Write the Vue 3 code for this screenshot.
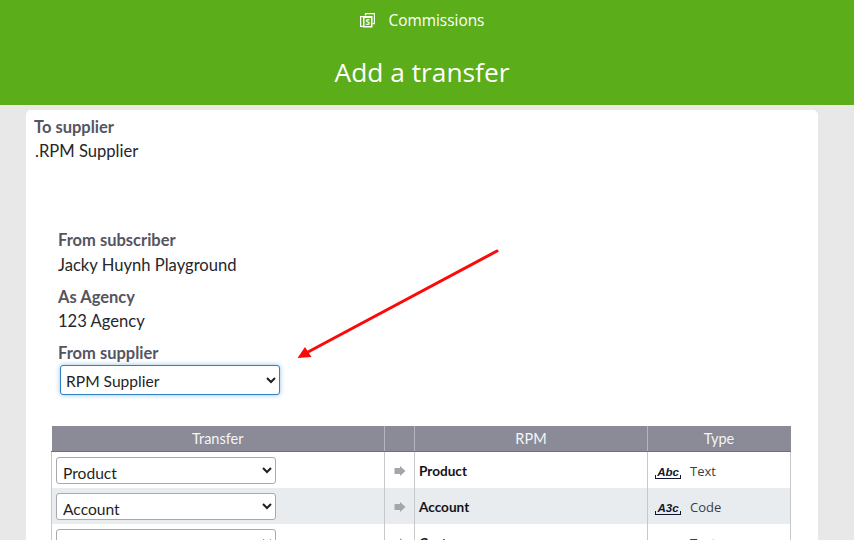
<template>
  <div class="page">
    <header class="top">
      <div class="nav">
        <svg class="nav-icon" width="15" height="15" viewBox="0 0 15 15" fill="none" stroke="#fff" stroke-width="1.2">
          <path d="M5.5 2.5V0.6h8.9v10h-2" />
          <path d="M3 13.4H0.6V3.6H3" />
          <rect x="3" y="3" width="9.5" height="11.5" fill="#fff" stroke="none" />
          <rect x="4.5" y="5" width="6.5" height="8" fill="#5bad1a" stroke="none" />
          <text x="7.7" y="12" class="nav-s">S</text>
        </svg>
        <span>Commissions</span>
      </div>
      <h1>Add a transfer</h1>
    </header>

    <main class="card">
      <section class="to">
        <div class="label">To supplier</div>
        <div class="value">.RPM Supplier</div>
      </section>

      <section class="from">
        <div class="label">From subscriber</div>
        <div class="value">Jacky Huynh Playground</div>
        <div class="label gap">As Agency</div>
        <div class="value">123 Agency</div>
        <div class="label gap">From supplier</div>
        <select class="supplier">
          <option>RPM Supplier</option>
        </select>
      </section>

      <table class="grid">
        <colgroup>
          <col class="c1" />
          <col class="c2" />
          <col class="c3" />
          <col class="c4" />
        </colgroup>
        <thead>
          <tr>
            <th>Transfer</th>
            <th></th>
            <th>RPM</th>
            <th>Type</th>
          </tr>
        </thead>
        <tbody>
          <tr v-for="row in rows" :key="row.name">
            <td class="pick">
              <select>
                <option>{{ row.pick }}</option>
              </select>
            </td>
            <td class="arrow">
              <svg width="12" height="10" viewBox="0 0 12 10">
                <path d="M0.5 2h5.5V0L11.5 5 6 10V8H0.5z" fill="#a5a5ab" />
              </svg>
            </td>
            <td class="name">{{ row.name }}</td>
            <td class="type">
              <span class="type-icon">{{ row.icon }}</span>
              <span>{{ row.type }}</span>
            </td>
          </tr>
        </tbody>
      </table>
    </main>

    <!-- annotation drawn over the screenshot -->
    <svg class="annotation" width="220" height="120" viewBox="0 0 220 120">
      <path d="M201 7 L12 108" stroke="#fb0a0a" stroke-width="3" stroke-linecap="round" />
      <path d="M1.5 114 L9 103 L15.5 113z" fill="#fb0a0a" />
    </svg>
  </div>
</template>

<script setup>
const rows = [
  { pick: 'Product', name: 'Product', icon: 'Abc', type: 'Text' },
  { pick: 'Account', name: 'Account', icon: 'A3c', type: 'Code' },
  { pick: '', name: 'Custom', icon: 'Abc', type: 'Text' }
]
</script>

<style>
html,
body {
  margin: 0;
  height: 540px;
  overflow: hidden;
  background: #e8e8e8;
}
</style>

<style scoped>
.page {
  position: relative;
  height: 540px;
  overflow: hidden;
  background: #e8e8e8;
  font-family: Lato, "Open Sans", sans-serif;
}

.top {
  height: 105px;
  padding-right: 10px;
  background: #5bad1a;
  color: #fff;
  font-family: "Open Sans", sans-serif;
  text-align: center;
}

.nav {
  display: flex;
  justify-content: center;
  align-items: center;
  gap: 14px;
  height: 40px;
  font-size: 15.4px;
}

.nav-s {
  font-size: 8px;
  font-weight: 700;
  fill: #fff;
  stroke: none;
  text-anchor: middle;
}

h1 {
  margin: 0;
  padding-top: 15px;
  font-size: 26.3px;
  font-weight: 400;
  line-height: 34px;
}

.card {
  box-sizing: border-box;
  height: 500px;
  margin: 5px 36px 0 26px;
  padding: 8px 27px 0 8px;
  background: #fff;
  border-radius: 5px;
}

.label {
  font-size: 16.5px;
  font-weight: 700;
  line-height: 18px;
  color: #55555f;
}

.value {
  margin-top: 6.5px;
  font-size: 16.6px;
  line-height: 18px;
  color: #26262b;
}

.to .value {
  margin-top: 6px;
  margin-left: 1px;
}

.from {
  padding: 71px 0 0 24px;
}

.gap {
  margin-top: 14px;
}

select {
  box-sizing: border-box;
  width: 220px;
  height: 27px;
  padding: 4px 2px 0;
  background: #fff;
  border: 1px solid #a9a9ae;
  border-radius: 3px;
  color: #1f1f24;
  font-family: Lato, "Open Sans", sans-serif;
  font-size: 15.6px;
}

.supplier {
  display: block;
  height: 30px;
  margin: 3px 0 0 2px;
  padding: 1px 2px 0 1px;
  border-color: #2f7fc1;
  box-shadow: 0 0 5px rgba(60, 140, 210, 0.55);
}

.grid {
  width: 739px;
  margin: 31px 0 0 17px;
  border-collapse: collapse;
  table-layout: fixed;
}

.c1 {
  width: 333px;
}

.c2 {
  width: 30px;
}

.c3 {
  width: 233px;
}

.c4 {
  width: 143px;
}

th {
  height: 25px;
  padding: 0;
  background: #8a8b96;
  border-right: 1px solid #b4b5bc;
  border-bottom: 1px solid #6f7079;
  color: #f4f4f6;
  font-size: 14.5px;
  font-weight: 400;
}

th:last-child {
  border-right: 1px solid #8a8b96;
}

td {
  box-sizing: border-box;
  height: 36px;
  padding: 0;
  border-left: 1px solid #c8c8cc;
  border-right: 1px solid #c8c8cc;
}

tbody tr:nth-child(even) {
  background: #e9ecee;
}

.pick {
  padding: 2px 0 0 4px;
  vertical-align: middle;
}

.arrow {
  padding: 2px 0 0 1px;
  text-align: center;
  line-height: 0;
}

.name {
  padding: 2px 0 0 4px;
  color: #14141a;
  font-size: 13.6px;
  font-weight: 700;
}

.type {
  padding: 2px 0 0 7px;
  color: #3c3c42;
  font-family: "Open Sans", sans-serif;
  font-size: 13px;
}

.type-icon {
  position: relative;
  display: inline-block;
  width: 26px;
  margin-right: 9px;
  border-bottom: 1px solid #10162f;
  color: #10162f;
  font-family: "Liberation Sans", sans-serif;
  font-size: 11.5px;
  font-style: italic;
  font-weight: 700;
  line-height: 11px;
  text-align: center;
}

.type-icon::before,
.type-icon::after {
  content: "";
  position: absolute;
  bottom: 0;
  height: 3px;
  border-left: 1px solid #10162f;
}

.type-icon::before {
  left: 0;
}

.type-icon::after {
  right: 0;
}

.annotation {
  position: absolute;
  left: 296px;
  top: 244px;
}
</style>
